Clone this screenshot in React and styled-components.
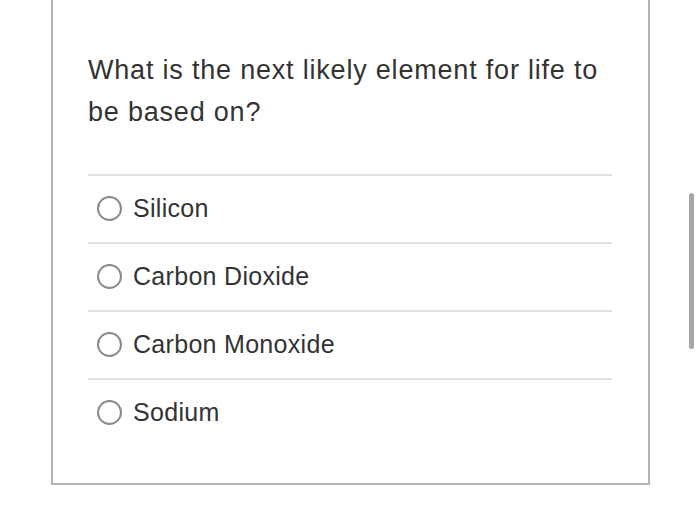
import React from "react";
import styled, { createGlobalStyle } from "styled-components";

const Global = createGlobalStyle`
  html, body { margin: 0; padding: 0; background: #ffffff; }
  *, *::before, *::after { box-sizing: border-box; }
  body { font-family: "Liberation Sans", Arial, Helvetica, sans-serif; }
`;

const Page = styled.div`
  position: relative;
  width: 700px;
  height: 525px;
  overflow: hidden;
  background: #ffffff;
`;

const Card = styled.div`
  margin-left: 51px;
  width: 599px;
  border: 2px solid #b4b4b4;
  border-top: none;
  padding: 49px 36px 37px 35px;
`;

const Question = styled.div`
  font-size: 27px;
  letter-spacing: 0.8px;
  line-height: 42px;
  color: #333333;
  padding-bottom: 41px;
`;

const Options = styled.div`
  display: flex;
  flex-direction: column;
`;

const Row = styled.label`
  display: flex;
  align-items: center;
  gap: 11px;
  height: 68px;
  border-top: 2px solid #e2e2e2;
  padding-left: 9px;
  padding-bottom: 1px;
  font-size: 25px;
  letter-spacing: 0.3px;
  color: #333333;
`;

const Radio = styled.span`
  width: 25px;
  height: 25px;
  border-radius: 50%;
  border: 2px solid #8a8a8a;
  flex: none;
`;

const Scrollbar = styled.div`
  position: absolute;
  left: 689px;
  top: 193px;
  width: 5px;
  height: 156px;
  border-radius: 3px;
  background: #a6a6a6;
`;

const options = ["Silicon", "Carbon Dioxide", "Carbon Monoxide", "Sodium"];

export default function App() {
  return (
    <Page>
      <Global />
      <Card>
        <Question>What is the next likely element for life to be based on?</Question>
        <Options>
          {options.map((o) => (
            <Row key={o}>
              <Radio />
              {o}
            </Row>
          ))}
        </Options>
      </Card>
      <Scrollbar />
    </Page>
  );
}
